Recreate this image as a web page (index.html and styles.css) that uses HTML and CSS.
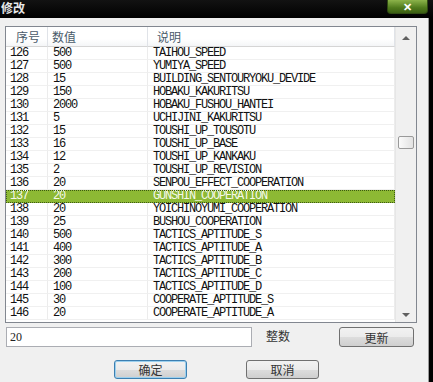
FILE: index.html
```html
<!DOCTYPE html>
<html lang="zh">
<head>
    <meta charset="UTF-8">
    <title>修改</title>
    <link rel="stylesheet" href="styles.css">
</head>
<body>
    <div class="window">
        <div class="titlebar">
            <span class="title">修改</span>
            <button class="close">&#x2715;</button>
        </div>
        <div class="content">
            <div class="list">
                <div class="table">
                    <div class="row head">
                        <div class="cell c1">序号</div>
                        <div class="cell c2">数值</div>
                        <div class="cell c3">说明</div>
                    </div>
                    <div class="row"><div class="cell">126</div><div class="cell">500</div><div class="cell">TAIHOU_SPEED</div></div>
                    <div class="row"><div class="cell">127</div><div class="cell">500</div><div class="cell">YUMIYA_SPEED</div></div>
                    <div class="row"><div class="cell">128</div><div class="cell">15</div><div class="cell">BUILDING_SENTOURYOKU_DEVIDE</div></div>
                    <div class="row"><div class="cell">129</div><div class="cell">150</div><div class="cell">HOBAKU_KAKURITSU</div></div>
                    <div class="row"><div class="cell">130</div><div class="cell">2000</div><div class="cell">HOBAKU_FUSHOU_HANTEI</div></div>
                    <div class="row"><div class="cell">131</div><div class="cell">5</div><div class="cell">UCHIJINI_KAKURITSU</div></div>
                    <div class="row"><div class="cell">132</div><div class="cell">15</div><div class="cell">TOUSHI_UP_TOUSOTU</div></div>
                    <div class="row"><div class="cell">133</div><div class="cell">16</div><div class="cell">TOUSHI_UP_BASE</div></div>
                    <div class="row"><div class="cell">134</div><div class="cell">12</div><div class="cell">TOUSHI_UP_KANKAKU</div></div>
                    <div class="row"><div class="cell">135</div><div class="cell">2</div><div class="cell">TOUSHI_UP_REVISION</div></div>
                    <div class="row"><div class="cell">136</div><div class="cell">20</div><div class="cell">SENPOU_EFFECT_COOPERATION</div></div>
                    <div class="row selected"><div class="cell">137</div><div class="cell">20</div><div class="cell">GUNSHIN_COOPERATION</div></div>
                    <div class="row"><div class="cell">138</div><div class="cell">20</div><div class="cell">YOICHINOYUMI_COOPERATION</div></div>
                    <div class="row"><div class="cell">139</div><div class="cell">25</div><div class="cell">BUSHOU_COOPERATION</div></div>
                    <div class="row"><div class="cell">140</div><div class="cell">500</div><div class="cell">TACTICS_APTITUDE_S</div></div>
                    <div class="row"><div class="cell">141</div><div class="cell">400</div><div class="cell">TACTICS_APTITUDE_A</div></div>
                    <div class="row"><div class="cell">142</div><div class="cell">300</div><div class="cell">TACTICS_APTITUDE_B</div></div>
                    <div class="row"><div class="cell">143</div><div class="cell">200</div><div class="cell">TACTICS_APTITUDE_C</div></div>
                    <div class="row"><div class="cell">144</div><div class="cell">100</div><div class="cell">TACTICS_APTITUDE_D</div></div>
                    <div class="row"><div class="cell">145</div><div class="cell">30</div><div class="cell">COOPERATE_APTITUDE_S</div></div>
                    <div class="row"><div class="cell">146</div><div class="cell">20</div><div class="cell">COOPERATE_APTITUDE_A</div></div>
                </div>
                <div class="scrollbar">
                    <div class="arrow up"></div>
                    <div class="track"><div class="thumb"></div></div>
                    <div class="arrow down"></div>
                </div>
            </div>
            <div class="edit-row">
                <input class="value" type="text" value="20">
                <span class="unit">整数</span>
                <button class="btn update">更新</button>
            </div>
            <div class="actions">
                <button class="btn default">确定</button>
                <button class="btn">取消</button>
            </div>
        </div>
    </div>
</body>
</html>
```

FILE: styles.css
```css
body {
    margin: 0;
    width: 433px;
    height: 382px;
    overflow: hidden;
    background: #000;
    font-family: "Noto Sans CJK SC", sans-serif;
}
.window {
    display: flex;
    flex-direction: column;
    height: 382px;
}
.titlebar {
    display: flex;
    justify-content: space-between;
    align-items: flex-start;
    height: 18px;
    padding-right: 5px;
    background: linear-gradient(#121212, #000);
}
.title {
    padding-left: 1px;
    font-size: 12px;
    font-weight: bold;
    line-height: 15px;
    color: #e8e8e8;
}
.close {
    width: 41px;
    height: 14px;
    padding: 0;
    border: 1px solid #2f4a12;
    border-top: none;
    border-radius: 0 0 4px 4px;
    background: linear-gradient(#8cb34a, #4f7a1c 60%, #3b5f12);
    color: #fff;
    font-size: 11px;
    font-weight: bold;
    line-height: 10px;
}
.content {
    flex: 1;
    margin-right: 4px;
    padding: 8px 0 0 5px;
    background: #f0f0f0;
    border-right: 1px solid #9a9a9a;
}
.list {
    display: flex;
    width: 410px;
    height: 295px;
    border: 1px solid #828790;
    background: #fff;
}
.table {
    flex: 1;
}
.row {
    display: grid;
    grid-template-columns: 42px 100px 1fr;
    height: 13px;
    font-family: "Liberation Mono", monospace;
    font-size: 12px;
    letter-spacing: -1.2px;
    line-height: 12px;
    color: #111;
}
.cell {
    padding-left: 4px;
    border-right: 1px solid #ececec;
    border-bottom: 1px solid #f0f0f0;
    white-space: nowrap;
    overflow: hidden;
}
.cell + .cell {
    padding-left: 5px;
}
.row.head {
    height: 20px;
    font-family: "Noto Sans CJK SC", sans-serif;
    font-size: 12px;
    letter-spacing: 0;
    line-height: 19px;
    color: #4a5a6a;
    background: linear-gradient(#fff, #fff 60%, #f3f4f6);
}
.head .cell {
    border-right-color: #e0e3e8;
    border-bottom-color: #d5d5d5;
}
.head .c1 {
    padding-left: 10px;
}
.head .c2 {
    padding-left: 4px;
}
.head .c3 {
    padding-left: 9px;
}
.row.selected {
    background: #8db934;
    color: #f4f8ea;
    outline: 1px dotted #3d5a12;
    outline-offset: -1px;
}
.selected .cell {
    border-color: transparent;
}
.scrollbar {
    display: flex;
    flex-direction: column;
    width: 20px;
    background: #f0f0f0;
    border-left: 1px solid #e6e6e6;
}
.arrow {
    height: 17px;
    display: flex;
    align-items: center;
    justify-content: center;
}
.arrow::before {
    content: "";
    border-left: 4px solid transparent;
    border-right: 4px solid transparent;
}
.arrow.up::before {
    border-bottom: 4px solid #606060;
    margin-top: 4px;
}
.arrow.down::before {
    border-top: 4px solid #606060;
    margin-top: 2px;
}
.track {
    flex: 1;
    padding-top: 92px;
}
.thumb {
    width: 14px;
    height: 11px;
    margin-left: 2px;
    border: 1px solid #9a9a9a;
    border-radius: 2px;
    background: linear-gradient(90deg, #fbfbfb, #e2e2e2);
}
.edit-row {
    display: flex;
    align-items: flex-start;
    margin-top: 4px;
}
.value {
    width: 246px;
    height: 20px;
    box-sizing: border-box;
    margin: 0 0 0 1px;
    padding: 0 3px;
    border: 1px solid #abadb3;
    font-family: "Liberation Serif", serif;
    font-size: 12px;
    color: #222;
}
.unit {
    width: 73px;
    padding-left: 14px;
    font-size: 12px;
    line-height: 17px;
    color: #333;
}
.btn {
    width: 75px;
    height: 20px;
    padding: 0;
    border: 1px solid #707070;
    border-radius: 3px;
    background: linear-gradient(#f2f2f2, #ebebeb 50%, #dddddd 51%, #cfcfcf);
    font-family: "Noto Sans CJK SC", sans-serif;
    font-size: 12px;
    line-height: 17px;
    color: #333;
}
.update {
    margin-left: 0;
}
.actions {
    display: flex;
    gap: 59px;
    margin-top: 13px;
    padding-left: 109px;
}
.actions .btn {
    width: 73px;
    height: 19px;
}
.btn.default {
    border-color: #3c7fb1;
    box-shadow: inset 0 0 0 1px #9cd0ee;
}
```
